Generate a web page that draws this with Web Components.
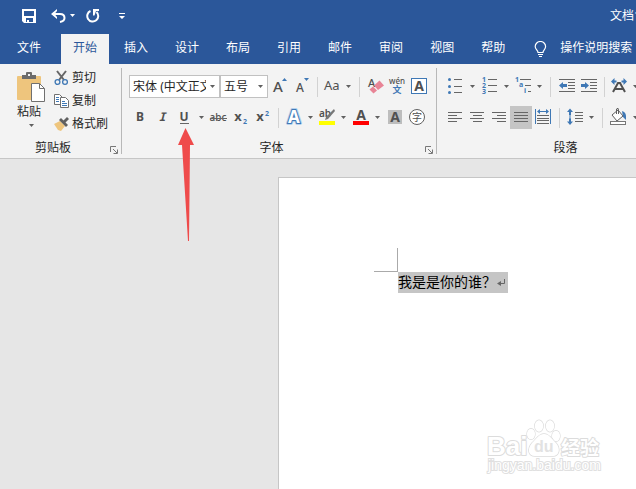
<!DOCTYPE html>
<html lang="zh-CN">
<head>
<meta charset="utf-8">
<title>文档1</title>
<style>
html, body { height: 100%; margin: 0; }
body { overflow: hidden; font: 12px/16px "Noto Sans", "Noto Sans CJK SC", sans-serif; color: #262626; }
</style>
</head>
<body>
<word-app></word-app>
<script>
const svg = (w, h, body) => `<svg width="${w}" height="${h}" viewBox="0 0 ${w} ${h}" aria-hidden="true">${body}</svg>`;
const G = '#666', B = '#3f78b5';
const lines = (list, c = G) => list.map(([x, y, w]) => `<rect x="${x}" y="${y}" width="${w}" height="1" fill="${c}" shape-rendering="crispEdges"/>`).join('');
const t = (x, y, size, s, extra = '') => `<text x="${x}" y="${y}" font-size="${size}" fill="#505050" ${extra}>${s}</text>`;
const ic = body => svg(22, 23, body);
const bold = 'font-weight="700" text-anchor="middle"';
const digit = (x, y, s) => `<text x="${x}" y="${y}" font-size="7" font-weight="700" fill="${B}">${s}</text>`;
const ICONS = {
  save: svg(14, 14, '<path fill="#fff" fill-rule="evenodd" d="M0 0h14v14H2L0 12zM2 2v5h10V2zM4 9v4h1v-2h2v2h4V9z"/>'),
  undo: svg(15, 14, '<path d="M3 5h6c3 0 4.500 1.500 4.500 4S12 12.500 9 13" fill="none" stroke="#fff" stroke-width="2"/><path d="M6 0v2L3.500 5 6 8v2L0 5z" fill="#fff"/>'),
  redo: svg(14, 14, '<path d="M4.500 2A5.500 5.500 0 1 0 10.500 3" fill="none" stroke="#fff" stroke-width="2"/><path d="M7 0h6v2h-3L8.500 6.500H7z" fill="#fff"/>'),
  customize: svg(6, 7, '<path d="M0 0h6v1H0zM0 3h6L3 6z" fill="#fff"/>'),
  bulb: svg(13, 17, '<path d="M4 11.500C4 9 1.200 8.500 1.200 5.500a5.200 5 0 0 1 10.400 0C11.600 8.500 9 9 9 11.500zM4 13.500h5M5 15.500h3" fill="none" stroke="#fff" stroke-width="1.200"/>'),
  paste: svg(28, 30, '<rect y="4" width="24" height="24" rx="1" fill="#eec57d"/><path d="M5 7V3h4V1q0-1 1-1h4q1 0 1 1v2h4v4z" fill="#6b6b6b"/><rect x="11" y="2" width="2" height="2" fill="#f3f3f3"/><path d="M14.500 11.500h8l5 5v13h-13z" fill="#fff" stroke="#707070"/><path d="M22.500 11.500v5h5" fill="none" stroke="#707070"/>'),
  cut: svg(15, 16, '<path d="M3 1l7 9M12 1L5 10" stroke="#666" stroke-width="2" fill="none"/><g fill="#f3f3f3" stroke="#3f78b5" stroke-width="1.300"><circle cx="3.500" cy="12" r="2.400"/><circle cx="11" cy="12" r="2.400"/></g>'),
  copy: svg(15, 16, '<g fill="#fff" stroke="#707070"><path d="M.5 1.500h5l3 3v7h-8z"/><path d="M6.500 4.500h5l3 3v7h-8z"/></g>' + lines([[2,4,3],[2,6,3],[2,8,3],[8,8,3],[8,10,5],[8,12,5]], B)),
  painter: svg(15, 16, '<path d="M0 8l6-3 5 5-4 5-3-1z" fill="#eec57d"/><path d="M5 4l2-2 7 7-2 2z" fill="#606060"/><path d="M9 5l4-4 2 2-5 5z" fill="#606060"/>'),
  grow: ic(t(10, 17, 15, 'A', 'text-anchor="middle" font-weight="500"') + '<path d="M14 6h5l-2.500-3z" fill="#3f78b5"/>'),
  shrink: ic(t(10, 17, 12, 'A', 'text-anchor="middle" font-weight="500"') + '<path d="M14 3h5l-2.500 3z" fill="#3f78b5"/>'),
  casing: svg(20, 23, t(2, 15, 13, 'Aa')),
  clear: ic(t(4, 12, 11, 'A', 'font-weight="500"') + '<path d="M15.500 5.500l4.500 5-6 4.500-4-4.500z" fill="#e88496"/><path d="M9 11.500l4 4-3.500 3L5.500 14.500z" fill="#e88496"/>'),
  pinyin: ic(t(11, 9, 8, 'wén', 'text-anchor="middle" font-weight="500"') + `<text x="11" y="18" font-size="9" text-anchor="middle" font-weight="700" fill="${B}">文</text>`),
  boxed: ic('<rect x="3.500" y="3.500" width="15" height="15" fill="#fff" stroke="#3f78b5"/>' + t(11, 16, 14, 'A', bold)),
  bold: ic(t(11, 15, 12, 'B', bold)),
  italic: ic(t(11, 15, 12, 'I', bold + ' font-style="italic" font-family="Noto Sans Mono,DejaVu Sans Mono"')),
  underline: ic(t(11, 15, 12, 'U', bold) + lines([[7,17,9]])),
  strike: ic(t(11, 15, 10, 'abc', 'text-anchor="middle" font-weight="500"') + lines([[3,12,17]])),
  sub: ic(t(9, 15, 13, 'x', bold) + digit(14, 18, 2)),
  sup: ic(t(9, 15, 13, 'x', bold) + digit(14, 10, 2)),
  effect: ic(`<text x="11" y="17" font-size="17" ${bold} fill="none" stroke="#b5d0ec" stroke-width="4" stroke-linejoin="round">A</text><text x="11" y="17" font-size="17" ${bold} fill="#fff" stroke="${B}" stroke-width="2" paint-order="stroke">A</text>`),
  highlight: ic(t(4, 11, 10, 'ab', 'font-weight="600"') + '<path d="M19 3l1 2-7 8-3 1 1-3z" fill="#777"/><rect x="4" y="15" width="16" height="4" fill="#ff0"/>'),
  color: ic(t(12, 14, 14, 'A', bold) + '<rect x="4" y="15" width="16" height="4" fill="#f00"/>'),
  shade: ic('<rect x="5" y="4" width="14" height="14" fill="#bdbdbd"/>' + t(12, 16, 14, 'A', bold)),
  circled: ic('<circle cx="12" cy="11" r="7.500" fill="#fff" stroke="#606060"/>' + t(12, 15, 10, '字', 'text-anchor="middle"')),
  bullets: ic([4,11,17].map(y => `<circle cx="5.500" cy="${y + .5}" r="1.500" fill="${B}"/>`).join('') + lines([[10,4,8],[10,11,8],[10,17,8]])),
  numbers: ic(digit(4, 7, 1) + digit(4, 13, 2) + digit(4, 19, 3) + lines([[10,4,9],[10,10,9],[10,16,9]])),
  levels: ic(digit(3, 7, 1) + digit(7, 12, 'a') + digit(12, 18, 'i') + lines([[8,4,11],[13,10,6],[16,16,3]])),
  outdent: ic(lines([[3,4,16],[12,7,7],[12,10,7],[12,13,7],[3,16,16]]) + '<path d="M3 10.500L7 7v2h4v3H7v2z" fill="#3f78b5"/>'),
  indent: ic(lines([[3,4,16],[12,7,7],[12,10,7],[12,13,7],[3,16,16]]) + '<path d="M11 10.500L7 7v2H3v3h4v2z" fill="#3f78b5"/>'),
  asian: ic('<path d="M3 6.500L6.500 3v2.500h2v2h-2V10zM19 6.500L15.500 3v2.500h-2v2h2V10z" fill="#3f78b5"/>' + '<path d="M5 17l5-9h2l5 9M7 14h8" fill="none" stroke="#505050" stroke-width="2"/>'),
  left: ic(lines([[4,6,14],[4,9,9],[4,12,14],[4,15,9]])),
  center: ic(lines([[4,6,14],[7,9,9],[4,12,14],[7,15,9]])),
  right: ic(lines([[4,6,14],[9,9,9],[4,12,14],[9,15,9]])),
  justify: ic(lines([[4,6,14],[4,9,14],[4,12,14],[4,15,14]])),
  distribute: ic('<path d="M3 3h1v15H3zM18 3h1v15h-1zM5 5.500L8 3v2h6V3l3 2.500L14 8V6H8v2z" fill="#3f78b5"/>' + lines([[5,9,12],[5,12,12],[5,14,12],[5,17,12]])),
  spacing: ic('<path d="M6 2.500L9 6H7v3H5V6H3zM6 19l3-3.500H7v-3H5v3H3z" fill="#3f78b5"/><path d="M5.500 8h1v6h-1z" fill="#3f78b5"/>' + lines([[11,6,8],[11,9,8],[11,12,8],[11,15,8]])),
  bucket: ic('<path d="M14 5q5 1 4 9l-3-3z" fill="#3f78b5"/><path d="M4 9l6-5 5 6-6 5z" fill="#fff" stroke="#606060"/><path d="M8.500 8V3q2-2 2 1v4" fill="none" stroke="#606060"/><rect x="2.500" y="15.500" width="15" height="3" fill="#fff" stroke="#777"/>'),
  launcher: svg(8, 8, '<path d="M.5 6V.5H6M3 3l4 4M7.500 3.500v4h-4" fill="none" stroke="#777"/>'),
  arrow: svg(7, 4, '<path d="M1 0h5L3.500 3z" fill="currentColor"/>')
};

const define = (name, css, html) => {
  const template = document.createElement('template');
  customElements.define(name, class extends HTMLElement {
    connectedCallback() {
      if (this.shadowRoot) return;
      template.innerHTML = `<style>*{box-sizing:border-box}button,select{font:inherit;color:inherit;margin:0;padding:0;border:0;border-radius:0;background:none}svg{display:block;flex:none}${css}</style>${typeof html === 'function' ? html(this) : html}`;
      this.attachShadow({ mode: 'open' }).append(template.content.cloneNode(true));
    }
  });
};

define('menu-split',
  `:host{display:flex;flex:none}
   button{display:flex;align-items:center;justify-content:center;min-height:23px}
   button:hover{background:#c5c5c580}
   :host([pressed]) button{background:#c5c5c5}
   .menu{width:12px;color:#606060}
   :host([tight]) .menu{width:10px}`,
  el => `<button aria-label="${el.getAttribute('label')}">${ICONS[el.getAttribute('icon')]}</button>` +
    (el.hasAttribute('menu') ? `<button class="menu" aria-label="${el.getAttribute('label')}选项">${ICONS.arrow}</button>` : ''));

define('tool-divider',
  `:host{display:flex;flex:none;width:10px;justify-content:center;align-items:center}
   :host([wide]){width:12px}:host([narrow]){width:8px}
   i{width:1px;height:20px;background:#d2d2d2}`, '<i></i>');

define('font-select',
  `:host{display:grid;flex:none;width:48px;align-items:center;background:#fff;border:1px solid #c1c1c1;height:23px}
   :host([wide]){width:91px}
   select,svg{grid-area:1/1}
   select{appearance:none;width:100%;height:21px;padding:0 13px 0 3px;outline:0}
   svg{justify-self:end;margin-right:3px;color:#606060;pointer-events:none}`,
  el => `<select aria-label="${el.getAttribute('label')}"><option>${el.getAttribute('value')}</option></select>${ICONS.arrow}`);

define('command-button',
  `:host{display:flex}button{display:flex;align-items:center;gap:3px;height:23px;white-space:nowrap}`,
  el => `<button>${ICONS[el.getAttribute('icon')]}<slot></slot></button>`);

define('paste-button',
  `button{display:grid;justify-items:center;justify-content:start;width:28px;margin-top:6px}.label{margin:2px 4px 4px 0}.arrow{color:#606060}`,
  `<button>${ICONS.paste}<span class="label"><slot></slot></span><span class="arrow">${ICONS.arrow}</span></button>`);

define('ribbon-group',
  `:host{display:flex;flex-direction:column;flex:none;position:relative;padding:2px 7px 0}
   :host([rule])::after{content:"";position:absolute;right:0;top:4px;bottom:4px;width:1px;background:#b8b8b8}
   :host(:not([rule])){min-width:273px}
   .body{flex:1;min-height:72px}
   footer{display:grid;grid-template-columns:1fr 16px;height:20px;margin:0 -7px}
   span{justify-self:center;align-self:center}
   button{justify-self:center;align-self:end;margin-bottom:4px}`,
  el => `<div class="body"><slot></slot></div><footer><span>${el.getAttribute('label')}</span>${el.hasAttribute('rule') ? `<button aria-label="${el.getAttribute('label')}设置">${ICONS.launcher}</button>` : ''}</footer>`);

define('title-bar',
  `:host{display:flex;align-items:center;height:34px;padding:0 0 2px 22px;background:#2b579a;color:#fff}
   button{display:flex;align-items:center;height:20px}
   .undo{margin-left:15px}.more{margin-left:3px}.redo{margin-left:10px}.custom{margin-left:19px}
   .title{margin-left:auto;width:26px;white-space:nowrap}`,
  `<button aria-label="保存">${ICONS.save}</button><button class="undo" aria-label="撤消">${ICONS.undo}</button><button class="more" aria-label="撤消列表">${ICONS.arrow}</button><button class="redo" aria-label="重复">${ICONS.redo}</button><button class="custom" aria-label="自定义">${ICONS.customize}</button><div class="title"><slot></slot></div>`);

define('ribbon-tab',
  `:host{display:flex;flex:none}button{padding:0 12px 2px;height:30px;color:#fff;white-space:nowrap}
   :host([file]) button{padding-left:17px;padding-right:17px}
   :host([active]) button{background:#f3f3f3;color:#2b579a}`,
  el => `<button role="tab" aria-selected="${el.hasAttribute('active')}"><slot></slot></button>`);

define('tell-me',
  `:host{display:flex;margin-left:14px}button{display:flex;align-items:center;gap:13px;height:30px;color:#fff;white-space:nowrap}span{padding-bottom:2px}`,
  `<button>${ICONS.bulb}<span><slot></slot></span></button>`);

define('tab-strip', `:host{display:flex;gap:3px;background:#2b579a}`, '<slot></slot>');

define('document-page',
  `:host{display:block;margin:18px 0 0 278px;padding:70px 0 0 95px;background:#fff;border:solid #c6c6c6;border-width:1px 0 0 1px}
   .corner{width:24px;height:24px;border:solid #aaa;border-width:0 1px 1px 0}
   p{display:flex;align-items:center;width:fit-content;margin:0 0 0 24px;padding-right:2px;height:21px;background:#c5c5c5;color:#000;font:14px/21px "Liberation Sans","Noto Sans CJK SC",sans-serif}`,
  `<div class="corner"></div><p><slot></slot>${svg(10, 9, '<path d="M8.500 1v4.500H3" fill="none" stroke="#666"/><path d="M5 3v5L1 5.500z" fill="#666"/>')}</p>`);

define('red-pointer', `:host{position:absolute;left:178px;top:128px;pointer-events:none}`,
  svg(17, 114, '<path d="M7.500 0L16 17h-4l-1 96h-1L4 17H0z" fill="#ef4b4b"/>'));

define('site-watermark',
  `:host{position:absolute;right:30px;bottom:10px;pointer-events:none}
   text{font-family:"Liberation Sans","Noto Sans CJK SC",sans-serif;font-weight:700}
   .url{font-weight:400}`,
  svg(120, 60, `<g fill="#fff" stroke="#dcdcdc" stroke-width="2" stroke-linejoin="round" paint-order="stroke">
    <text x="1" y="36" font-size="26">Bai</text><text x="75" y="36" font-size="19">经验</text>
    <g stroke-width="1.300"><ellipse cx="45" cy="15" rx="4" ry="5.300"/><ellipse cx="53" cy="7" rx="4.200" ry="5.800"/><ellipse cx="64" cy="7" rx="4.200" ry="5.800"/><ellipse cx="70" cy="17" rx="4" ry="5.300"/><path d="M58 15c5 0 7 4 12 9 5 6 3 13-3 13H49c-7 0-8-7-3-13 5-5 7-9 12-9z"/></g></g>
    <text x="48" y="33" font-size="16" fill="#e2e2e2">du</text>
    <text class="url" x="2" y="51" font-size="14" fill="#fff" stroke="#e0e0e0" stroke-width="2" paint-order="stroke">jingyan.baidu.com</text>`));

const b = (icon, label, attrs = '') => `<menu-split icon="${icon}" label="${label}" ${attrs}></menu-split>`;
const d = (attr = '') => `<tool-divider ${attr}></tool-divider>`;
define('word-app',
  `:host{display:flex;flex-direction:column;position:relative;height:100%;overflow:hidden;background:#e6e6e6}
   .ribbon{display:flex;background:#f3f3f3;border-bottom:1px solid #c6c6c6}
   .clip{display:flex;gap:9px;padding:0 7px 0 10px}
   .row{display:flex;align-items:center;height:23px}
   .tools{display:grid;gap:8px;padding-top:9px}
   document-page{flex:1}`,
  `<title-bar>文档1</title-bar>
   <tab-strip role="tablist"><ribbon-tab file>文件</ribbon-tab><ribbon-tab active>开始</ribbon-tab>${['插入','设计','布局','引用','邮件','审阅','视图','帮助'].map(s => `<ribbon-tab>${s}</ribbon-tab>`).join('')}<tell-me>操作说明搜索</tell-me></tab-strip>
   <div class="ribbon">
    <ribbon-group label="剪贴板" rule><div class="clip"><paste-button>粘贴</paste-button><div class="commands"><command-button icon="cut">剪切</command-button><command-button icon="copy">复制</command-button><command-button icon="painter">格式刷</command-button></div></div></ribbon-group>
    <ribbon-group label="字体" rule><div class="tools">
     <div class="row"><font-select wide label="字体" value="宋体 (中文正文)"></font-select><font-select label="字号" value="五号"></font-select>${b('grow','增大字号')}${b('shrink','减小字号')}${d()}${b('casing','更改大小写','menu')}${d()}${b('clear','清除格式')}${b('pinyin','拼音指南')}${b('boxed','字符边框')}</div>
     <div class="row">${b('bold','加粗')}${b('italic','倾斜')}${b('underline','下划线','menu')}${b('strike','删除线')}${b('sub','下标')}${b('sup','上标')}${d()}${b('effect','文本效果','menu tight')}${b('highlight','突出显示','menu')}${b('color','字体颜色','menu')}${b('shade','字符底纹')}${b('circled','带圈字符')}</div>
    </div></ribbon-group>
    <ribbon-group label="段落"><div class="tools">
     <div class="row">${b('bullets','项目符号','menu')}${b('numbers','编号','menu')}${b('levels','多级列表','menu tight')}${d('wide')}${b('outdent','减少缩进')}${b('indent','增加缩进')}${d('narrow')}${b('asian','中文版式','menu tight')}</div>
     <div class="row">${b('left','左对齐')}${b('center','居中')}${b('right','右对齐')}${b('justify','两端对齐','pressed')}${b('distribute','分散对齐')}${d()}${b('spacing','行距','menu tight')}${d('wide')}${b('bucket','底纹','menu tight')}</div>
    </div></ribbon-group>
   </div>
   <document-page>我是是你的谁？</document-page>
   <red-pointer></red-pointer><site-watermark></site-watermark>`);
</script>
</body>
</html>
